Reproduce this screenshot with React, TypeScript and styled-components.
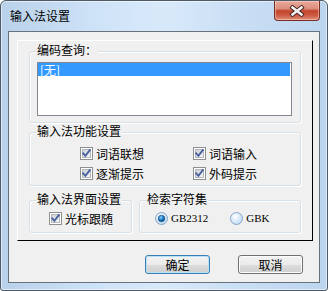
import React from "react";
import styled, { createGlobalStyle } from "styled-components";

const GlobalStyle = createGlobalStyle`
  html, body { margin: 0; padding: 0; width: 328px; height: 291px; overflow: hidden; background: #ffffff; }
  * { box-sizing: border-box; }
  body { font-family: "Noto Sans CJK SC", "Noto Sans", sans-serif; font-size: 12px; color: #000; }
`;

const Window = styled.div`
  width: 328px;
  height: 291px;
  border: 1px solid #4e5a66;
  border-radius: 6px 6px 3px 3px;
  background: linear-gradient(90deg, #b9d1ea 0%, #cfe3f8 30%, #d8e9fa 50%, #c6dcf3 80%, #bcd5ef 100%);
  box-shadow: inset 0 0 0 1px rgba(255, 255, 255, 0.55);
  display: flex;
  flex-direction: column;
  overflow: hidden;
`;

const TitleBar = styled.div`
  height: 30px;
  display: flex;
  align-items: center;
  padding-left: 9px;
  flex-shrink: 0;
`;

const TitleText = styled.span`
  font-size: 12px;
  line-height: 14px;
  color: #000;
`;

const CloseButton = styled.div`
  margin-left: auto;
  margin-right: 7px;
  align-self: flex-start;
  width: 46px;
  height: 20px;
  border: 1px solid #7b2c22;
  border-top: none;
  border-radius: 0 0 4px 4px;
  background: linear-gradient(180deg, #e9a99b 0%, #dc8e7e 40%, #c3442d 52%, #cc5a43 75%, #e08f79 100%);
  box-shadow: inset 0 0 0 1px rgba(255, 230, 220, 0.45);
  display: flex;
  align-items: center;
  justify-content: center;
`;

const Client = styled.div`
  margin: 0 7px 7px 7px;
  height: 252px;
  border: 1px solid #68727d;
  background: #f0f0f0;
  padding: 8px 0 0 8px;
  display: flex;
  flex-direction: column;
`;

const Panel = styled.div`
  width: 296px;
  height: 201px;
  border-top: 1px solid #ffffff;
  border-left: 1px solid #ffffff;
  border-right: 1px solid #000000;
  border-bottom: 1px solid #000000;
  padding: 10px 0 0 11px;
  display: flex;
  flex-direction: column;
`;

const GroupBox = styled.div<{ $w: number; $h: number; $mt: number; $pt: number; $pl: number }>`
  position: relative;
  width: ${(p) => p.$w}px;
  height: ${(p) => p.$h}px;
  margin-top: ${(p) => p.$mt}px;
  padding: ${(p) => p.$pt}px 0 0 ${(p) => p.$pl}px;
  border: 1px solid #d5dfe5;
  border-radius: 3px;
  box-shadow: inset 1px 1px 0 #ffffff, 1px 1px 0 #ffffff;
  flex-shrink: 0;
`;

const GroupLabel = styled.span`
  position: absolute;
  top: -9px;
  left: 6px;
  padding: 0 1px;
  background: #f0f0f0;
  font-size: 12px;
  line-height: 14px;
  white-space: nowrap;
`;

const GroupRow = styled.div`
  display: flex;
  gap: 7px;
`;

const ListBox = styled.div`
  width: 255px;
  height: 54px;
  border: 1px solid #828790;
  background: #ffffff;
`;

const ListItem = styled.div<{ $selected?: boolean }>`
  height: 13px;
  line-height: 13px;
  padding-left: 2px;
  font-size: 12px;
  color: ${(p) => (p.$selected ? "#ffffff" : "#000")};
  background: ${(p) => (p.$selected ? "#3399ff" : "transparent")};
  margin-right: 1px;
`;

const CheckGrid = styled.div`
  display: grid;
  grid-template-columns: 113px 100px;
  row-gap: 7px;
`;

const OptionItem = styled.label`
  display: flex;
  align-items: center;
  gap: 3px;
  height: 13px;
  font-size: 12px;
  line-height: 13px;
  white-space: nowrap;
`;

const RadioRow = styled.div`
  display: flex;
  gap: 22px;
`;

const AsciiText = styled.span`
  font-family: "Liberation Serif", "DejaVu Serif", serif;
  font-size: 11px;
  line-height: 13px;
`;

const ButtonRow = styled.div`
  display: flex;
  justify-content: flex-end;
  gap: 28px;
  margin-top: 14px;
  padding-right: 16px;
`;

const Button = styled.div<{ $default?: boolean }>`
  width: 65px;
  height: 19px;
  border: 1px solid ${(p) => (p.$default ? "#3c7fb1" : "#707070")};
  border-radius: 3px;
  background: linear-gradient(180deg, #f2f2f2 0%, #ebebeb 50%, #dddddd 51%, #cfcfcf 100%);
  box-shadow: inset 0 0 0 1px ${(p) => (p.$default ? "#b8e2f9" : "#fcfcfc")};
  display: flex;
  align-items: center;
  justify-content: center;
  font-size: 12px;
  line-height: 14px;
`;

const CheckIcon: React.FC = () => (
  <svg width="13" height="13" viewBox="0 0 13 13">
    <defs>
      <linearGradient id="cbfill" x1="0" y1="0" x2="1" y2="1">
        <stop offset="0" stopColor="#cbcfd5" />
        <stop offset="1" stopColor="#f6f6f6" />
      </linearGradient>
    </defs>
    <rect x="0.5" y="0.5" width="12" height="12" fill="#ffffff" stroke="#8e8f8f" />
    <rect x="2.5" y="2.5" width="8" height="8" fill="url(#cbfill)" stroke="#b4b8bd" />
    <path d="M3.2 6.4 L5.4 8.8 L9.8 3.2" fill="none" stroke="#4a62a0" strokeWidth="1.9" strokeLinecap="square" />
  </svg>
);

const RadioIcon: React.FC<{ checked?: boolean }> = ({ checked }) => (
  <svg width="13" height="13" viewBox="0 0 13 13">
    <defs>
      <radialGradient id="rbfill" cx="0.4" cy="0.35" r="0.7">
        <stop offset="0" stopColor="#ffffff" />
        <stop offset="1" stopColor="#b9daf6" />
      </radialGradient>
      <radialGradient id="rbdot" cx="0.4" cy="0.35" r="0.7">
        <stop offset="0" stopColor="#8fd2ff" />
        <stop offset="0.5" stopColor="#1f7fc8" />
        <stop offset="1" stopColor="#0d3d6e" />
      </radialGradient>
    </defs>
    <circle cx="6.5" cy="6.5" r="6" fill="url(#rbfill)" stroke="#8aa4c2" />
    {checked && <circle cx="6.5" cy="6.5" r="3.3" fill="url(#rbdot)" stroke="#1b4f80" strokeWidth="0.6" />}
  </svg>
);

const CloseGlyph: React.FC = () => (
  <svg width="16" height="12" viewBox="0 0 16 12">
    <path d="M3.5 2.5 L12.5 9.5 M12.5 2.5 L3.5 9.5" stroke="#4a2a26" strokeWidth="4.4" strokeLinecap="square" />
    <path d="M3.5 2.5 L12.5 9.5 M12.5 2.5 L3.5 9.5" stroke="#f4f4f4" strokeWidth="2.4" strokeLinecap="square" />
  </svg>
);

const Check: React.FC<{ label: string }> = ({ label }) => (
  <OptionItem>
    <CheckIcon />
    <span>{label}</span>
  </OptionItem>
);

export default function App() {
  return (
    <>
      <GlobalStyle />
      <Window>
        <TitleBar>
          <TitleText>输入法设置</TitleText>
          <CloseButton>
            <CloseGlyph />
          </CloseButton>
        </TitleBar>
        <Client>
          <Panel>
            <GroupBox $w={272} $h={72} $mt={0} $pt={10} $pl={7}>
              <GroupLabel>编码查询：</GroupLabel>
              <ListBox>
                <ListItem $selected>[无]</ListItem>
              </ListBox>
            </GroupBox>
            <GroupBox $w={272} $h={54} $mt={9} $pt={14} $pl={50}>
              <GroupLabel>输入法功能设置</GroupLabel>
              <CheckGrid>
                <Check label="词语联想" />
                <Check label="词语输入" />
                <Check label="逐渐提示" />
                <Check label="外码提示" />
              </CheckGrid>
            </GroupBox>
            <GroupRow>
              <GroupBox $w={103} $h={33} $mt={14} $pt={11} $pl={19}>
                <GroupLabel>输入法界面设置</GroupLabel>
                <Check label="光标跟随" />
              </GroupBox>
              <GroupBox $w={162} $h={33} $mt={14} $pt={11} $pl={15}>
                <GroupLabel>检索字符集</GroupLabel>
                <RadioRow>
                  <OptionItem>
                    <RadioIcon checked />
                    <AsciiText>GB2312</AsciiText>
                  </OptionItem>
                  <OptionItem>
                    <RadioIcon />
                    <AsciiText>GBK</AsciiText>
                  </OptionItem>
                </RadioRow>
              </GroupBox>
            </GroupRow>
          </Panel>
          <ButtonRow>
            <Button $default>确定</Button>
            <Button>取消</Button>
          </ButtonRow>
        </Client>
      </Window>
    </>
  );
}
